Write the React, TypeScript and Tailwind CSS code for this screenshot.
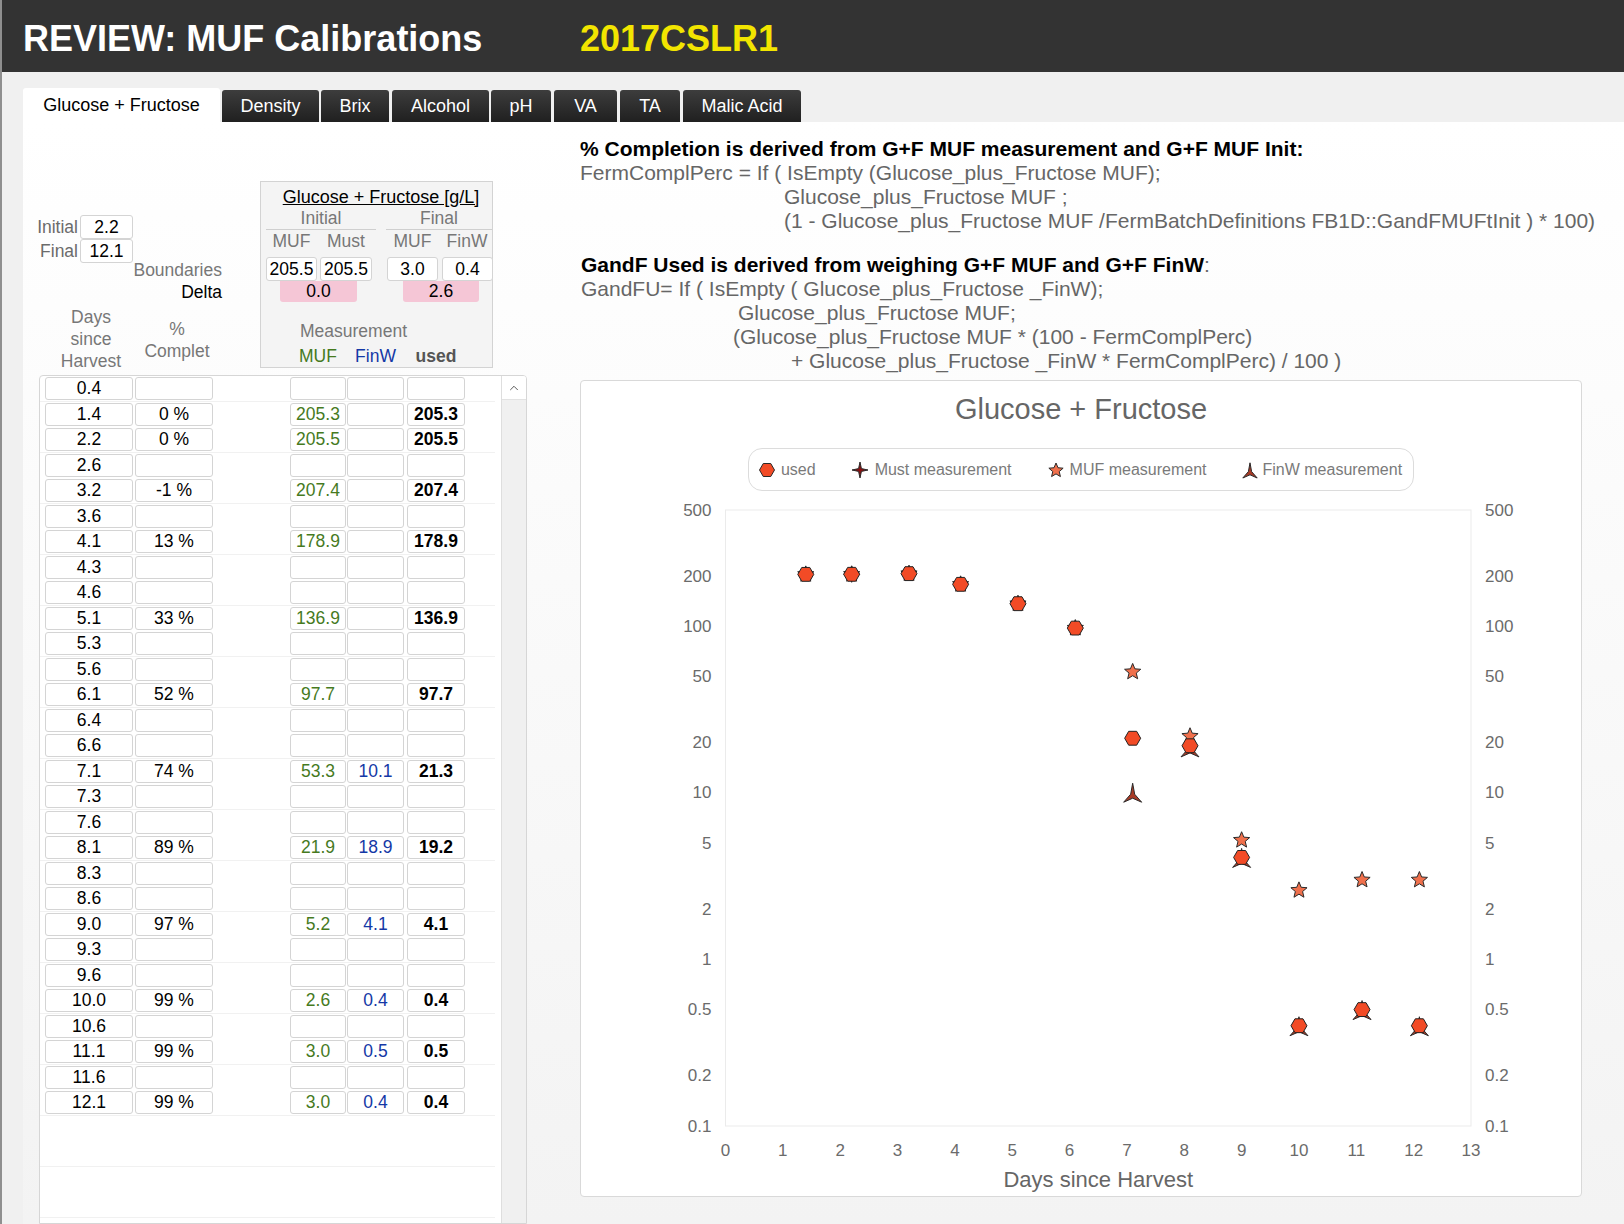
import React from "react";
import { ChevronUp } from "lucide-react";

type Row = [string, string, string, string, string];
const rows: Row[] = [
  ["0.4", "", "", "", ""],
  ["1.4", "0 %", "205.3", "", "205.3"],
  ["2.2", "0 %", "205.5", "", "205.5"],
  ["2.6", "", "", "", ""],
  ["3.2", "-1 %", "207.4", "", "207.4"],
  ["3.6", "", "", "", ""],
  ["4.1", "13 %", "178.9", "", "178.9"],
  ["4.3", "", "", "", ""],
  ["4.6", "", "", "", ""],
  ["5.1", "33 %", "136.9", "", "136.9"],
  ["5.3", "", "", "", ""],
  ["5.6", "", "", "", ""],
  ["6.1", "52 %", "97.7", "", "97.7"],
  ["6.4", "", "", "", ""],
  ["6.6", "", "", "", ""],
  ["7.1", "74 %", "53.3", "10.1", "21.3"],
  ["7.3", "", "", "", ""],
  ["7.6", "", "", "", ""],
  ["8.1", "89 %", "21.9", "18.9", "19.2"],
  ["8.3", "", "", "", ""],
  ["8.6", "", "", "", ""],
  ["9.0", "97 %", "5.2", "4.1", "4.1"],
  ["9.3", "", "", "", ""],
  ["9.6", "", "", "", ""],
  ["10.0", "99 %", "2.6", "0.4", "0.4"],
  ["10.6", "", "", "", ""],
  ["11.1", "99 %", "3.0", "0.5", "0.5"],
  ["11.6", "", "", "", ""],
  ["12.1", "99 %", "3.0", "0.4", "0.4"],
];

const tabs = [
  { label: "Density", cls: "ml-[2px] w-[97px]" },
  { label: "Brix", cls: "ml-[2px] w-[68px]" },
  { label: "Alcohol", cls: "ml-[3px] w-[97px]" },
  { label: "pH", cls: "ml-[2px] w-[60px]" },
  { label: "VA", cls: "ml-[3px] w-[63px]" },
  { label: "TA", cls: "ml-[3px] w-[60px]" },
  { label: "Malic Acid", cls: "ml-[3px] w-[118px]" },
];

const cell =
  "h-[23px] shrink-0 rounded-[3px] border border-[#d4d4d4] bg-white flex items-center justify-center";

function hexPath(cx: number, cy: number, r = 8) {
  const pts: string[] = [];
  for (let i = 0; i < 6; i++) {
    const a = (Math.PI / 3) * i;
    pts.push(`${(cx + r * Math.cos(a)).toFixed(2)},${(cy + r * Math.sin(a)).toFixed(2)}`);
  }
  return "M" + pts.join("L") + "Z";
}
function starPath(cx: number, cy: number, n: number, R: number, r: number) {
  const pts: string[] = [];
  for (let i = 0; i < n * 2; i++) {
    const a = -Math.PI / 2 + (Math.PI / n) * i;
    const rad = i % 2 === 0 ? R : r;
    pts.push(`${(cx + rad * Math.cos(a)).toFixed(2)},${(cy + rad * Math.sin(a)).toFixed(2)}`);
  }
  return "M" + pts.join("L") + "Z";
}
function triPath(cx: number, cy: number, s = 1) {
  return `M${cx},${cy - 9 * s}L${cx + 2 * s},${cy + 2 * s}L${cx + 9 * s},${cy + 10 * s}L${cx},${cy + 6 * s}L${cx - 9 * s},${cy + 10 * s}L${cx - 2 * s},${cy + 2 * s}Z`;
}

const X0 = 144.5;
const X1 = 890;
const Y0 = 19;
const Y1 = 635;
const xs = (d: number) => X0 + (d * (X1 - X0)) / 13;
const ys = (v: number) => Y1 - ((Y1 - Y0) * Math.log10(v / 0.1)) / Math.log10(5000);

const usedPts: [number, number][] = [
  [1.4, 205.3], [2.2, 205.5], [3.2, 207.4], [4.1, 178.9], [5.1, 136.9], [6.1, 97.7],
  [7.1, 21.3], [8.1, 19.2], [9.0, 4.1], [10.0, 0.4], [11.1, 0.5], [12.1, 0.4],
];
const mufPts: [number, number][] = [
  [1.4, 205.3], [2.2, 205.5], [3.2, 207.4], [4.1, 178.9], [5.1, 136.9], [6.1, 97.7],
  [7.1, 53.3], [8.1, 21.9], [9.0, 5.2], [10.0, 2.6], [11.1, 3.0], [12.1, 3.0],
];
const finwPts: [number, number][] = [
  [7.1, 10.1], [8.1, 18.9], [9.0, 4.1], [10.0, 0.4], [11.1, 0.5], [12.1, 0.4],
];
const yTicks = [500, 200, 100, 50, 20, 10, 5, 2, 1, 0.5, 0.2, 0.1];

function Chart() {
  return (
    <svg width={1000} height={705} className="block">
      <rect x={X0} y={Y0} width={X1 - X0} height={Y1 - Y0} fill="white" stroke="#ebebeb" strokeWidth={1} />
      {yTicks.map((v) => (
        <g key={v} fontSize={17} fill="#6b6b6b" fontFamily="'Liberation Sans', Arial, sans-serif">
          <text x={130.5} y={ys(v)} textAnchor="end" dominantBaseline="central">{String(v)}</text>
          <text x={904} y={ys(v)} textAnchor="start" dominantBaseline="central">{String(v)}</text>
        </g>
      ))}
      {Array.from({ length: 14 }, (_, i) => (
        <text key={i} x={xs(i)} y={659} textAnchor="middle" dominantBaseline="central" fontSize={17} fill="#6b6b6b" fontFamily="'Liberation Sans', Arial, sans-serif">
          {i}
        </text>
      ))}
      <text x={(X0 + X1) / 2} y={688} textAnchor="middle" dominantBaseline="central" fontSize={22} fill="#666" fontFamily="'Liberation Sans', Arial, sans-serif">
        Days since Harvest
      </text>
      {finwPts.map(([d, v], i) => (
        <path key={"f" + i} d={triPath(xs(d), ys(v))} fill="#a83b26" stroke="#2a2a2a" strokeWidth={1} strokeLinejoin="round" />
      ))}
      <path d={starPath(xs(2.2), ys(205.5), 4, 8, 2.2)} fill="#8b1010" stroke="#2a2a2a" strokeWidth={1} />
      {mufPts.map(([d, v], i) => (
        <path key={"m" + i} d={starPath(xs(d), ys(v), 5, 8.5, 3.8)} fill="#f0704c" stroke="#2a2a2a" strokeWidth={1} strokeLinejoin="round" />
      ))}
      {usedPts.map(([d, v], i) => (
        <path key={"u" + i} d={hexPath(xs(d), ys(v))} fill="#f24b26" stroke="#222" strokeWidth={1} />
      ))}
    </svg>
  );
}

function LegendIcon({ kind }: { kind: "used" | "must" | "muf" | "finw" }) {
  let d = "";
  let fill = "";
  if (kind === "used") { d = hexPath(7, 7, 7.5); fill = "#f24b26"; }
  if (kind === "must") { d = starPath(7, 7, 4, 8, 2); fill = "#8b1010"; }
  if (kind === "muf") { d = starPath(7, 7.5, 5, 7.5, 3.4); fill = "#f0704c"; }
  if (kind === "finw") { d = triPath(7, 7, 0.8); fill = "#a83b26"; }
  return (
    <svg width={14} height={16} viewBox="0 -1 14 16" className="shrink-0 overflow-visible">
      <path d={d} fill={fill} stroke="#2a2a2a" strokeWidth={1} strokeLinejoin="round" />
    </svg>
  );
}

export default function App() {
  const extra = Array.from({ length: 8 }, (_, i) => i);
  return (
    <div className="w-[1624px] h-[1224px] overflow-hidden flex flex-col font-['Liberation_Sans',Arial,sans-serif] bg-[#f0f0f0] border-l-2 border-[#8f8f8f]">
      <header className="h-[72px] shrink-0 bg-[#333333] flex items-center pl-[21px] pt-[5px]">
        <div className="w-[557px] text-white font-bold text-[36px] leading-none">REVIEW: MUF Calibrations</div>
        <div className="text-[#f2e500] font-bold text-[36px] leading-none">2017CSLR1</div>
      </header>

      <div className="flex-1 min-h-0 flex flex-col pl-[21px] pt-[16px]">
        {/* tabs */}
        <div className="h-[34px] shrink-0 flex items-end text-[18px]">
          <div className="w-[197px] h-[34px] bg-white rounded-t-[3px] flex items-center justify-center text-black">
            Glucose + Fructose
          </div>
          {tabs.map((t) => (
            <div
              key={t.label}
              className={`${t.cls} h-[32px] rounded-t-[3px] bg-linear-to-b from-[#3d3d3d] to-[#202020] text-white flex items-center justify-center`}
            >
              {t.label}
            </div>
          ))}
        </div>

        {/* panel */}
        <div className="flex-1 min-h-0 flex bg-linear-to-b from-white to-[#f3f3f3]">
          {/* left column */}
          <div className="w-[504px] shrink-0 flex flex-col min-h-0 text-[17.5px]">
            <div className="h-[253px] shrink-0 flex">
              <div className="w-[237px] flex flex-col pt-[93px]">
                <div className="flex items-center h-[24px]">
                  <span className="w-[57px] text-right pr-[2px] text-[#6b6b6b]">Initial</span>
                  <div className={`${cell} w-[53px] h-[24px] text-black`}>2.2</div>
                </div>
                <div className="flex items-center h-[24px]">
                  <span className="w-[57px] text-right pr-[2px] text-[#6b6b6b]">Final</span>
                  <div className={`${cell} w-[53px] h-[24px] text-black`}>12.1</div>
                </div>
                <div className="-mt-[4px] h-[22px] leading-[22px] w-[199px] text-right text-[#777]">Boundaries</div>
                <div className="h-[22px] leading-[22px] w-[199px] text-right text-black">Delta</div>
                <div className="mt-[3px] flex text-[#777] leading-[22px]">
                  <div className="ml-[23px] w-[90px] text-center">
                    Days
                    <br />
                    since
                    <br />
                    Harvest
                  </div>
                  <div className="ml-[1px] w-[80px] mt-[12px] text-center">
                    %
                    <br />
                    Complet
                  </div>
                </div>
              </div>

              {/* group box */}
              <div className="mt-[59px] w-[233px] h-[187px] border border-[#d3d3d3] bg-[#f4f4f4] flex flex-col">
                <div className="mt-[4px] h-[22px] leading-[22px] text-center pl-[9px] underline text-black text-[18px]">
                  Glucose + Fructose [g/L]
                </div>
                <div className="flex h-[22px] text-[#777]">
                  <div className="ml-[5px] w-[110px] border-b border-[#cfcfcf] text-center leading-[21px]">Initial</div>
                  <div className="ml-[10px] w-[106px] border-b border-[#cfcfcf] text-center leading-[21px]">Final</div>
                </div>
                <div className="flex h-[22px] leading-[22px] text-[#777]">
                  <div className="ml-[5px] w-[51px] text-center">MUF</div>
                  <div className="ml-[3px] w-[52px] text-center">Must</div>
                  <div className="ml-[15px] w-[51px] text-center">MUF</div>
                  <div className="ml-[4px] w-[50px] text-center">FinW</div>
                </div>
                <div className="mt-[5px] flex h-[24px] text-black">
                  <div className={`${cell} ml-[5px] w-[51px] h-[24px]`}>205.5</div>
                  <div className={`${cell} ml-[3px] w-[52px] h-[24px]`}>205.5</div>
                  <div className={`${cell} ml-[15px] w-[51px] h-[24px]`}>3.0</div>
                  <div className={`${cell} ml-[4px] w-[51px] h-[24px]`}>0.4</div>
                </div>
                <div className="flex h-[21px] text-black">
                  <div className="ml-[19px] w-[77px] bg-[#f5c6d6] rounded-b-[3px] flex items-center justify-center">0.0</div>
                  <div className="ml-[46px] w-[76px] bg-[#f5c6d6] rounded-b-[3px] flex items-center justify-center">2.6</div>
                </div>
                <div className="mt-[18px] h-[22px] leading-[22px] w-[185px] text-center text-[#777]">Measurement</div>
                <div className="mt-[3px] flex h-[22px] leading-[22px]">
                  <div className="ml-[29px] w-[56px] text-center text-[#467a1e]">MUF</div>
                  <div className="ml-[1px] w-[57px] text-center text-[#1438a6]">FinW</div>
                  <div className="ml-[3px] w-[58px] text-center font-bold text-[#555]">used</div>
                </div>
              </div>
            </div>

            {/* list */}
            <div className="ml-[16px] w-[488px] flex-1 min-h-0 border border-[#d6d6d6] rounded-t-[4px] bg-white flex overflow-hidden">
              <div className="w-[461px] shrink-0 flex flex-col">
                {rows.map((r, i) => (
                  <div
                    key={i}
                    className={
                      i % 2 === 0
                        ? "h-[25.5px] shrink-0 flex items-center mr-[6px] border-b border-[#f1f1f1]"
                        : "h-[25.5px] shrink-0 flex items-center mr-[6px]"
                    }
                  >
                    <div className={`${cell} ml-[5px] w-[88px] text-black`}>{r[0]}</div>
                    <div className={`${cell} ml-[2px] w-[78px] text-black`}>{r[1]}</div>
                    <div className={`${cell} ml-[77px] w-[56px] text-[#467a1e]`}>{r[2]}</div>
                    <div className={`${cell} ml-[1px] w-[57px] text-[#1438a6]`}>{r[3]}</div>
                    <div className={`${cell} ml-[3px] w-[58px] text-black font-bold`}>{r[4]}</div>
                  </div>
                ))}
                {extra.map((i) => (
                  <div
                    key={"e" + i}
                    className={
                      i % 2 === 1
                        ? "h-[25.5px] shrink-0 mr-[6px] border-b border-[#f1f1f1]"
                        : "h-[25.5px] shrink-0 mr-[6px]"
                    }
                  />
                ))}
              </div>
              <div className="w-[25px] shrink-0 border-l border-[#dedede] bg-[#f0f0f0] flex flex-col">
                <div className="h-[24px] bg-white border-b border-[#e2e2e2] flex items-center justify-center">
                  <ChevronUp size={14} strokeWidth={1.5} color="#444" />
                </div>
              </div>
            </div>
          </div>

          {/* right column */}
          <div className="ml-[53px] w-[1002px] shrink-0 flex flex-col pt-[15px] text-[21px] leading-[24px] text-[#666]">
            <div className="font-bold text-black whitespace-nowrap">
              % Completion is derived from G+F MUF measurement and G+F MUF Init:
            </div>
            <div className="whitespace-nowrap">FermComplPerc = If ( IsEmpty (Glucose_plus_Fructose MUF);</div>
            <div className="pl-[204px] whitespace-nowrap">Glucose_plus_Fructose MUF ;</div>
            <div className="pl-[204px] whitespace-nowrap">
              (1 - Glucose_plus_Fructose MUF /FermBatchDefinitions FB1D::GandFMUFtInit ) * 100)
            </div>
            <div className="mt-[20px] pl-[1px] whitespace-nowrap">
              <span className="font-bold text-black">GandF Used is derived from weighing G+F MUF and G+F FinW</span>:
            </div>
            <div className="pl-[1px] whitespace-nowrap">GandFU= If ( IsEmpty ( Glucose_plus_Fructose _FinW);</div>
            <div className="pl-[158px] whitespace-nowrap">Glucose_plus_Fructose MUF;</div>
            <div className="pl-[153px] whitespace-nowrap">(Glucose_plus_Fructose MUF * (100 - FermComplPerc)</div>
            <div className="pl-[211px] whitespace-nowrap">+ Glucose_plus_Fructose _FinW * FermComplPerc) / 100 )</div>

            <div className="mt-[7px] h-[817px] shrink-0 rounded-[4px] border border-[#d9d9d9] bg-white flex flex-col items-center">
              <div className="mt-[11px] text-[29px] leading-[34px] text-[#666]">Glucose + Fructose</div>
              <div className="mt-[22px] h-[43px] rounded-[14px] border border-[#dcdcdc] flex items-center px-[11px] gap-[37px] text-[16px] leading-none text-[#7a7a7a]">
                <div className="flex items-center gap-[7px]">
                  <LegendIcon kind="used" />
                  <span>used</span>
                </div>
                <div className="flex items-center gap-[8px]">
                  <LegendIcon kind="must" />
                  <span>Must measurement</span>
                </div>
                <div className="flex items-center gap-[7px]">
                  <LegendIcon kind="muf" />
                  <span>MUF measurement</span>
                </div>
                <div className="flex items-center gap-[5px]">
                  <LegendIcon kind="finw" />
                  <span>FinW measurement</span>
                </div>
              </div>
              <div className="self-start">
                <Chart />
              </div>
            </div>
          </div>
        </div>
      </div>
    </div>
  );
}
